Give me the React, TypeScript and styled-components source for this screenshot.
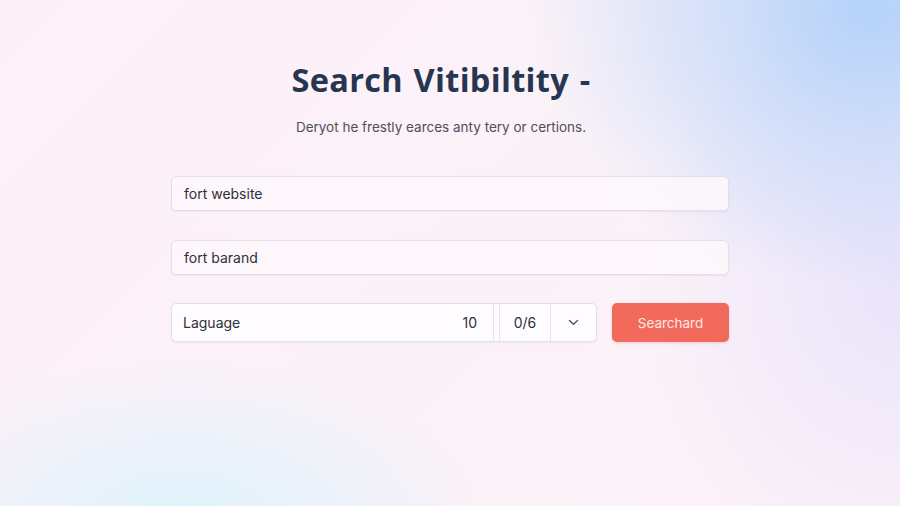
import React from "react";
import styled, { createGlobalStyle } from "styled-components";

const Global = createGlobalStyle`
  html, body { margin: 0; padding: 0; }
  body { font-family: "Inter", "Noto Sans", sans-serif; }
  #root { height: 506px; }
`;

const Page = styled.div`
  height: 506px;
  width: 900px;
  box-sizing: border-box;
  overflow: hidden;
  background:
    radial-gradient(ellipse 340px 280px at 870px 10px, rgba(176, 208, 250, 0.95), rgba(190, 214, 250, 0) 100%),
    radial-gradient(ellipse 300px 160px at 180px 520px, rgba(220, 242, 252, 0.95), rgba(220, 242, 252, 0) 100%),
    radial-gradient(ellipse 260px 300px at 900px 280px, rgba(226, 222, 252, 0.7), rgba(226, 222, 252, 0) 100%),
    linear-gradient(135deg, #fef0f9 0%, #fbf2f8 50%, #fcf1f8 100%);
  display: flex;
  flex-direction: column;
  align-items: center;
  padding-top: 57px;
`;

const Header = styled.div`
  display: flex;
  flex-direction: column;
  align-items: center;
  margin-right: 18px;
`;

const Title = styled.h1`
  margin: 0;
  font-family: "Open Sans", "Noto Sans", sans-serif;
  font-weight: 700;
  font-size: 32.5px;
  line-height: 46px;
  color: #263650;
  letter-spacing: 0.3px;
  word-spacing: 2px;
`;

const Subtitle = styled.p`
  margin: 15px 0 0;
  font-family: "Inter", "Noto Sans", sans-serif;
  font-size: 13.5px;
  line-height: 18px;
  color: #4f4f5c;
`;

const Form = styled.div`
  margin-top: 40px;
  width: 558px;
  display: flex;
  flex-direction: column;
  gap: 29px;
`;

const Field = styled.div`
  height: 35px;
  box-sizing: border-box;
  border: 1px solid #e6dde6;
  border-radius: 5px;
  background: rgba(253, 248, 252, 0.85);
  box-shadow: 0 1px 2px rgba(120, 100, 130, 0.08);
  display: flex;
  align-items: center;
  padding: 0 12px;
  font-size: 14px;
  color: #2f2f38;
`;

const Row = styled.div`
  display: flex;
  gap: 15px;
  height: 39px;
  margin-top: -1px;
`;

const Group = styled.div`
  flex: 0 0 426px;
  box-sizing: border-box;
  border: 1px solid #e4dfe6;
  border-radius: 5px;
  background: #fefcfe;
  box-shadow: 0 1px 2px rgba(120, 100, 130, 0.08);
  display: flex;
  align-items: stretch;
  overflow: hidden;
`;

const Cell = styled.div<{ $w?: number; $grow?: boolean; $justify?: string; $pad?: string; $divider?: boolean }>`
  ${(p) => (p.$grow ? "flex: 1 1 auto;" : `flex: 0 0 ${p.$w}px;`)}
  display: flex;
  align-items: center;
  justify-content: ${(p) => p.$justify || "flex-start"};
  padding: ${(p) => p.$pad || "0"};
  box-sizing: border-box;
  font-size: 14px;
  color: #2f2f38;
  border-left: ${(p) => (p.$divider ? "1px solid #e8e3ea" : "none")};
`;

const Spacer = styled.div`
  flex: 0 0 5px;
  border-left: 1px solid #e8e3ea;
`;

const Button = styled.button`
  flex: 1 1 auto;
  border: none;
  border-radius: 5px;
  background: #f26a5c;
  color: #fdeae6;
  font-family: "Inter", "Noto Sans", sans-serif;
  font-size: 13.5px;
  box-shadow: 0 1px 3px rgba(200, 80, 70, 0.2);
  cursor: pointer;
`;

const Chevron = () => (
  <svg width="11" height="7" viewBox="0 0 11 7" fill="none">
    <path d="M1.5 1.5 L5.5 5.2 L9.5 1.5" stroke="#555560" strokeWidth="1.4" strokeLinecap="round" strokeLinejoin="round" />
  </svg>
);

export default function App() {
  return (
    <>
      <Global />
      <Page>
        <Header>
          <Title>Search Vitibiltity -</Title>
          <Subtitle>Deryot he frestly earces anty tery or certions.</Subtitle>
        </Header>
        <Form>
          <Field>fort website</Field>
          <Field>fort barand</Field>
          <Row>
            <Group>
              <Cell $grow $pad="0 12px 0 11px">Laguage</Cell>
              <Cell $w={50} $justify="flex-end" $pad="0 16px 0 0">10</Cell>
              <Spacer />
              <Cell $w={51} $justify="center" $divider>0/6</Cell>
              <Cell $w={46} $justify="center" $divider>
                <Chevron />
              </Cell>
            </Group>
            <Button>Searchard</Button>
          </Row>
        </Form>
      </Page>
    </>
  );
}
